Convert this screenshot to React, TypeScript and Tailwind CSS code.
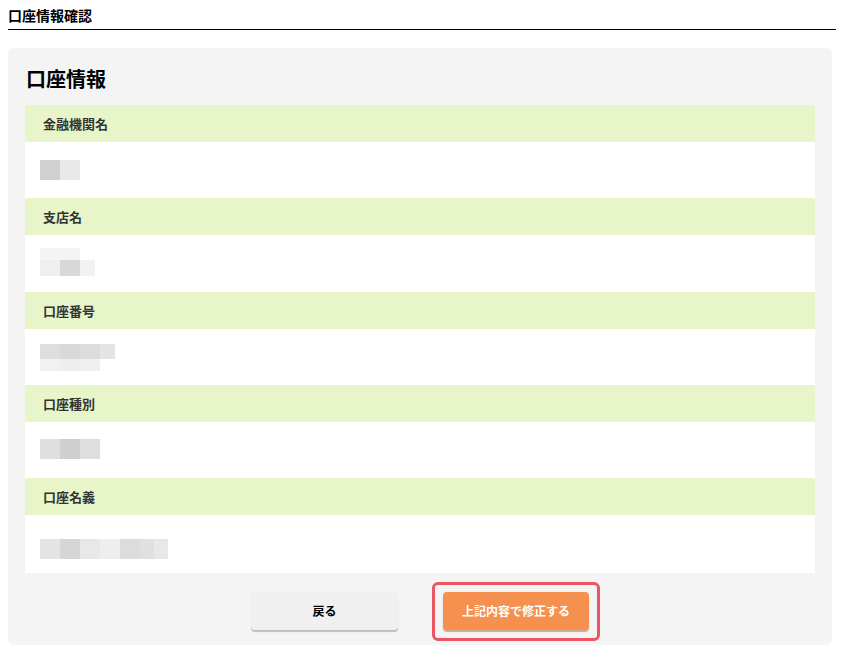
import React from "react";

type Cell = { w: number; c: string };
type Blur = { rows: { h: number; cells: Cell[] }[] };

const fields: { label: string; blur: Blur; pt: number; vh: number }[] = [
  {
    label: "金融機関名",
    pt: 18,
    vh: 56,
    blur: { rows: [{ h: 20, cells: [{ w: 20, c: "#d0d0d0" }, { w: 20, c: "#e8e8e8" }] }] },
  },
  {
    label: "支店名",
    pt: 13,
    vh: 57,
    blur: {
      rows: [
        { h: 12, cells: [{ w: 40, c: "#f4f4f4" }] },
        { h: 16, cells: [{ w: 20, c: "#efefef" }, { w: 20, c: "#d8d8d8" }, { w: 15, c: "#f2f2f2" }] },
      ],
    },
  },
  {
    label: "口座番号",
    pt: 15,
    vh: 56,
    blur: {
      rows: [
        { h: 15, cells: [{ w: 20, c: "#dedede" }, { w: 20, c: "#d9d9d9" }, { w: 20, c: "#dcdcdc" }, { w: 15, c: "#e4e4e4" }] },
        { h: 12, cells: [{ w: 20, c: "#f1f1f1" }, { w: 20, c: "#eeeeee" }, { w: 20, c: "#f0f0f0" }] },
      ],
    },
  },
  {
    label: "口座種別",
    pt: 17,
    vh: 56,
    blur: { rows: [{ h: 20, cells: [{ w: 20, c: "#dfdfdf" }, { w: 20, c: "#cfcfcf" }, { w: 20, c: "#dedede" }] }] },
  },
  {
    label: "口座名義",
    pt: 24,
    vh: 58,
    blur: {
      rows: [
        {
          h: 20,
          cells: [
            { w: 20, c: "#e4e4e4" },
            { w: 20, c: "#d6d6d6" },
            { w: 20, c: "#e8e8e8" },
            { w: 20, c: "#eeeeee" },
            { w: 20, c: "#dcdcdc" },
            { w: 14, c: "#e0e0e0" },
            { w: 14, c: "#e8e8e8" },
          ],
        },
      ],
    },
  },
];

function BlurBlock({ blur }: { blur: Blur }) {
  return (
    <div className="flex flex-col">
      {blur.rows.map((r, i) => (
        <div key={i} className="flex">
          {r.cells.map((c, j) => (
            <div key={j} style={{ width: c.w, height: r.h, background: c.c }} />
          ))}
        </div>
      ))}
    </div>
  );
}

export default function App() {
  return (
    <div
      className="w-[844px] h-[659px] bg-white px-2 text-[#222]"
      style={{ fontFamily: '"Noto Sans CJK JP", "Noto Sans", sans-serif' }}
    >
      <div className="h-[30px] border-b border-black flex items-start pt-[5px]">
        <h1 className="text-[14px] leading-[20px] font-bold text-black">口座情報確認</h1>
      </div>
      <div className="mt-[18px] bg-[#f4f4f4] rounded-md px-[17px] pt-[16px] pb-[15px] w-[824px]">
        <h2 className="text-[20px] leading-[30px] font-bold text-black pl-[1px] mb-[11px]">口座情報</h2>
        <div className="flex flex-col">
          {fields.map((f) => (
            <div key={f.label}>
              <div className="h-[37px] bg-[#e7f5c9] flex items-center pl-[18px] text-[13px] font-bold text-[#333]">
                {f.label}
              </div>
              <div className="bg-white pl-[15px]" style={{ paddingTop: f.pt, height: f.vh }}>
                <BlurBlock blur={f.blur} />
              </div>
            </div>
          ))}
        </div>
        <div className="flex justify-center gap-[45px] mt-[19px]">
          <button className="w-[147px] h-[38px] rounded bg-[#f0f0f0] shadow-[0_2px_1px_rgba(0,0,0,0.22)] text-[12px] font-bold text-black">
            戻る
          </button>
          <div className="relative">
            <button className="w-[146px] h-[38px] rounded bg-[#f5904f] shadow-[0_2px_1px_rgba(160,80,30,0.45)] text-[12px] font-bold text-white">
              上記内容で修正する
            </button>
            <div className="absolute left-[-11px] right-[-11px] top-[-10px] bottom-[-11px] border-[3px] border-[#ea5562] rounded-[6px] pointer-events-none" />
          </div>
        </div>
      </div>
    </div>
  );
}
